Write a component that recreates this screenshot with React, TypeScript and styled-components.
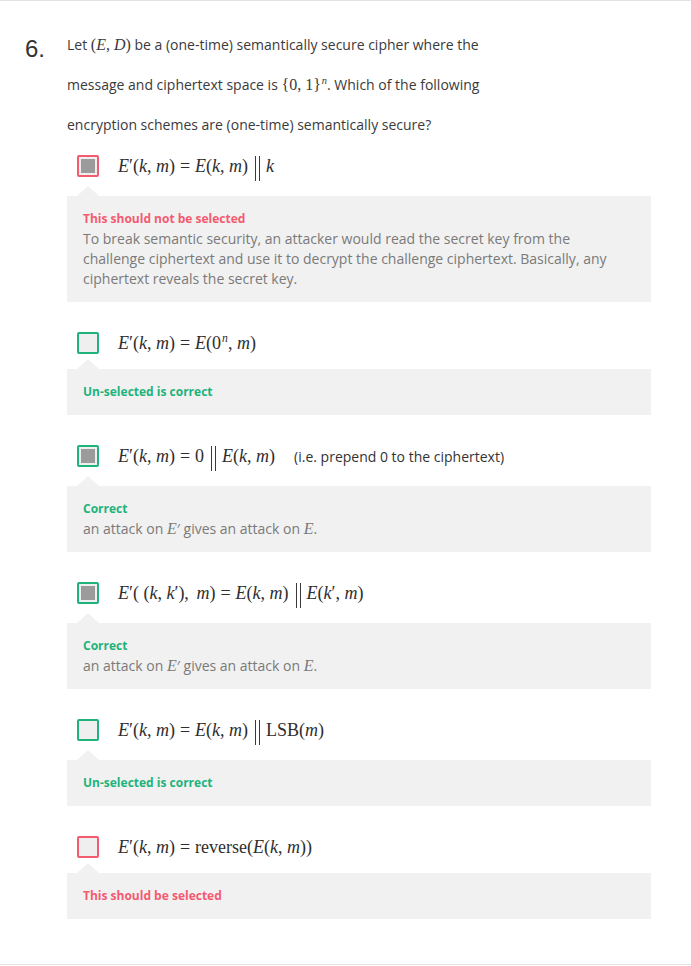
import * as React from 'react';
import styled, { createGlobalStyle } from 'styled-components';

const COLORS = {
  text: '#363636',
  muted: '#7a7a7a',
  panel: '#f1f1f1',
  red: '#f45a70',
  green: '#1db37b',
  rule: '#e2e2e2',
  tick: '#9b9b9b',
};

type Verdict = 'wrong' | 'right';

type OptionData = {
  checked: boolean;
  verdict: Verdict;
  formula: React.ReactNode;
  label: string;
  body?: React.ReactNode;
};

const GlobalStyle = createGlobalStyle`
  html, body {
    margin: 0;
    padding: 0;
    background: #ffffff;
  }
  body {
    font-family: "Open Sans", "Liberation Sans", sans-serif;
    color: ${COLORS.text};
  }
`;

// built lazily so the styled parts below exist by the time it runs
function buildOptions(): OptionData[] {
  const attackNote = (
    <>
      an attack on <V>E</V>′ gives an attack on <V>E</V>.
    </>
  );

  return [
    {
      checked: true,
      verdict: 'wrong',
      formula: (
        <>
          <V>E</V>′(<V>k</V>, <V>m</V>)<Eq>=</Eq><V>E</V>(<V>k</V>, <V>m</V>)
          <Bars /><V>k</V>
        </>
      ),
      label: 'This should not be selected',
      body: 'To break semantic security, an attacker would read the secret key from the challenge ciphertext and use it to decrypt the challenge ciphertext. Basically, any ciphertext reveals the secret key.',
    },
    {
      checked: false,
      verdict: 'right',
      formula: (
        <>
          <V>E</V>′(<V>k</V>, <V>m</V>)<Eq>=</Eq><V>E</V>(0<Sup>n</Sup>, <V>m</V>)
        </>
      ),
      label: 'Un-selected is correct',
    },
    {
      checked: true,
      verdict: 'right',
      formula: (
        <>
          <V>E</V>′(<V>k</V>, <V>m</V>)<Eq>=</Eq>0<Bars /><V>E</V>(<V>k</V>, <V>m</V>)
          <Aside>(i.e. prepend 0 to the ciphertext)</Aside>
        </>
      ),
      label: 'Correct',
      body: attackNote,
    },
    {
      checked: true,
      verdict: 'right',
      formula: (
        <>
          <V>E</V>′( (<V>k</V>, <V>k</V>′), <Gap /><V>m</V>)<Eq>=</Eq><V>E</V>(<V>k</V>, <V>m</V>)
          <Bars /><V>E</V>(<V>k</V>′, <V>m</V>)
        </>
      ),
      label: 'Correct',
      body: attackNote,
    },
    {
      checked: false,
      verdict: 'right',
      formula: (
        <>
          <V>E</V>′(<V>k</V>, <V>m</V>)<Eq>=</Eq><V>E</V>(<V>k</V>, <V>m</V>)
          <Bars />LSB(<V>m</V>)
        </>
      ),
      label: 'Un-selected is correct',
    },
    {
      checked: false,
      verdict: 'wrong',
      formula: (
        <>
          <V>E</V>′(<V>k</V>, <V>m</V>)<Eq>=</Eq>reverse(<V>E</V>(<V>k</V>, <V>m</V>))
        </>
      ),
      label: 'This should be selected',
    },
  ];
}

function Option({ data }: { data: OptionData }) {
  return (
    <OptionBlock>
      <Row>
        <Checkbox $verdict={data.verdict} $checked={data.checked} />
        <Formula>{data.formula}</Formula>
      </Row>
      <Feedback>
        <Label $verdict={data.verdict}>{data.label}</Label>
        {data.body && <Body>{data.body}</Body>}
      </Feedback>
    </OptionBlock>
  );
}

export default function App() {
  const options = buildOptions();
  return (
    <>
      <GlobalStyle />
      <Page>
        <Number>6.</Number>
        <Content>
          <Question>
            Let <QMath>(<V>E</V>, <V>D</V>)</QMath> be a (one-time) semantically secure cipher where the
            message and ciphertext space is{' '}
            <QMath>
              {'{'}0, 1{'}'}
              <Sup>n</Sup>
            </QMath>
            . Which of the following encryption schemes are (one-time) semantically secure?
          </Question>
          <OptionList>
            {options.map((o, i) => (
              <Option key={i} data={o} />
            ))}
          </OptionList>
        </Content>
      </Page>
    </>
  );
}

const Page = styled.div`
  display: flex;
  align-items: flex-start;
  padding: 24px 40px 45px 25px;
  border-top: 1px solid ${COLORS.rule};
  border-bottom: 1px solid ${COLORS.rule};
`;

const Number = styled.div`
  flex: 0 0 42px;
  margin-top: 12px;
  font-family: "Liberation Sans", Arial, sans-serif;
  font-size: 24px;
  line-height: 24px;
  color: #333333;
`;

const Content = styled.div`
  flex: 1;
  min-width: 0;
`;

const Question = styled.p`
  margin: 0;
  max-width: 440px;
  font-size: 14px;
  line-height: 40px;
  color: #3a3a3a;
`;

const QMath = styled.span`
  font-family: "Liberation Serif", "Times New Roman", serif;
  font-size: 16px;
`;

const V = styled.i`
  font-family: "Liberation Serif", "Times New Roman", serif;
  font-style: italic;
`;

const Sup = styled.sup`
  font-family: "Liberation Serif", "Times New Roman", serif;
  font-style: italic;
  font-size: 0.65em;
  line-height: 0;
  vertical-align: 0.6em;
  margin-left: 1px;
`;

const Eq = styled.span`
  margin: 0 5px;
`;

const Gap = styled.span`
  display: inline-block;
  width: 3px;
`;

const Bars = styled.span`
  display: inline-block;
  width: 3px;
  height: 25px;
  margin: 0 6px 0 7px;
  vertical-align: -9px;
  border-left: 1px solid #3a3a3a;
  border-right: 1px solid #3a3a3a;
`;

const Aside = styled.span`
  margin-left: 19px;
  font-family: "Open Sans", "Liberation Sans", sans-serif;
  font-size: 14px;
  color: #333333;
`;

const OptionList = styled.div`
  margin-top: 10px;
`;

const OptionBlock = styled.div`
  & + & {
    margin-top: 30px;
  }
`;

const Row = styled.div`
  display: flex;
  align-items: flex-start;
  gap: 19px;
  padding-left: 10px;
`;

const Checkbox = styled.span<{ $verdict: Verdict; $checked: boolean }>`
  position: relative;
  flex: 0 0 22px;
  box-sizing: border-box;
  width: 22px;
  height: 22px;
  border: 2px solid ${(p) => (p.$verdict === 'wrong' ? COLORS.red : COLORS.green)};
  border-radius: 2px;
  background: #efefef;

  &::after {
    content: '';
    display: ${(p) => (p.$checked ? 'block' : 'none')};
    position: absolute;
    inset: 2px;
    background: ${COLORS.tick};
  }
`;

const Formula = styled.div`
  font-family: "Liberation Serif", "Times New Roman", serif;
  font-size: 18px;
  line-height: 22px;
  color: #2e2e2e;
  white-space: nowrap;
`;

const Feedback = styled.div`
  position: relative;
  margin-top: 15px;
  padding: 13px 16px;
  background: ${COLORS.panel};

  &::before {
    content: '';
    position: absolute;
    left: 10px;
    top: -10px;
    border-left: 11px solid transparent;
    border-right: 11px solid transparent;
    border-bottom: 10px solid ${COLORS.panel};
  }
`;

const Label = styled.div<{ $verdict: Verdict }>`
  font-size: 12px;
  font-weight: 700;
  line-height: 20px;
  color: ${(p) => (p.$verdict === 'wrong' ? COLORS.red : COLORS.green)};
`;

const Body = styled.div`
  max-width: 540px;
  font-size: 14px;
  line-height: 20px;
  color: ${COLORS.muted};

  ${V} {
    font-size: 16px;
  }
`;
